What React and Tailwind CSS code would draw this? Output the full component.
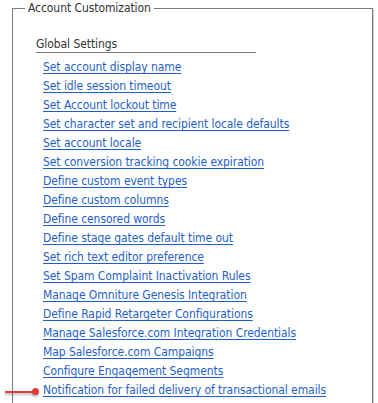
const links = [
  "Set account display name",
  "Set idle session timeout",
  "Set Account lockout time",
  "Set character set and recipient locale defaults",
  "Set account locale",
  "Set conversion tracking cookie expiration",
  "Define custom event types",
  "Define custom columns",
  "Define censored words",
  "Define stage gates default time out",
  "Set rich text editor preference",
  "Set Spam Complaint Inactivation Rules",
  "Manage Omniture Genesis Integration",
  "Define Rapid Retargeter Configurations",
  "Manage Salesforce.com Integration Credentials",
  "Map Salesforce.com Campaigns",
  "Configure Engagement Segments",
  "Notification for failed delivery of transactional emails",
];

export default function App() {
  return (
    <div
      className="relative h-[403px] w-[378px] overflow-hidden bg-white text-[12px] tracking-[-0.07px]"
      style={{ fontFamily: "'DejaVu Sans Condensed', 'DejaVu Sans', sans-serif" }}
    >
      <fieldset className="ml-[12px] w-[361px] border border-[#7a7a7a] px-0 pb-4 pt-[20px] shadow-[1px_1px_0_#d0d0d0]">
        <legend className="ml-[12px] px-[3px] leading-[16px] text-[#333]">Account Customization</legend>
        <div className="pl-[23px]">
          <div className="w-[220px] border-b border-[#777] leading-[16px] text-[#333]">Global Settings</div>
          <ul className="mt-[5px] pl-[7px]">
            {links.map((l) => (
              <li key={l} className="h-[19px] leading-[19px]">
                <a href="#" className="text-[#1f5fc8] underline underline-offset-[2px]">
                  {l}
                </a>
              </li>
            ))}
          </ul>
        </div>
      </fieldset>

      {/* red pointer arrow */}
      <div className="absolute left-[5px] top-[388px] flex items-center">
        <div className="h-[2px] w-[30px] bg-[#e23b3b] shadow-[0_2px_2px_rgba(0,0,0,0.25)]" />
        <div className="-ml-[3px] h-[7px] w-[7px] rounded-full bg-[#e23b3b] shadow-[0_2px_2px_rgba(0,0,0,0.25)]" />
      </div>
    </div>
  );
}
